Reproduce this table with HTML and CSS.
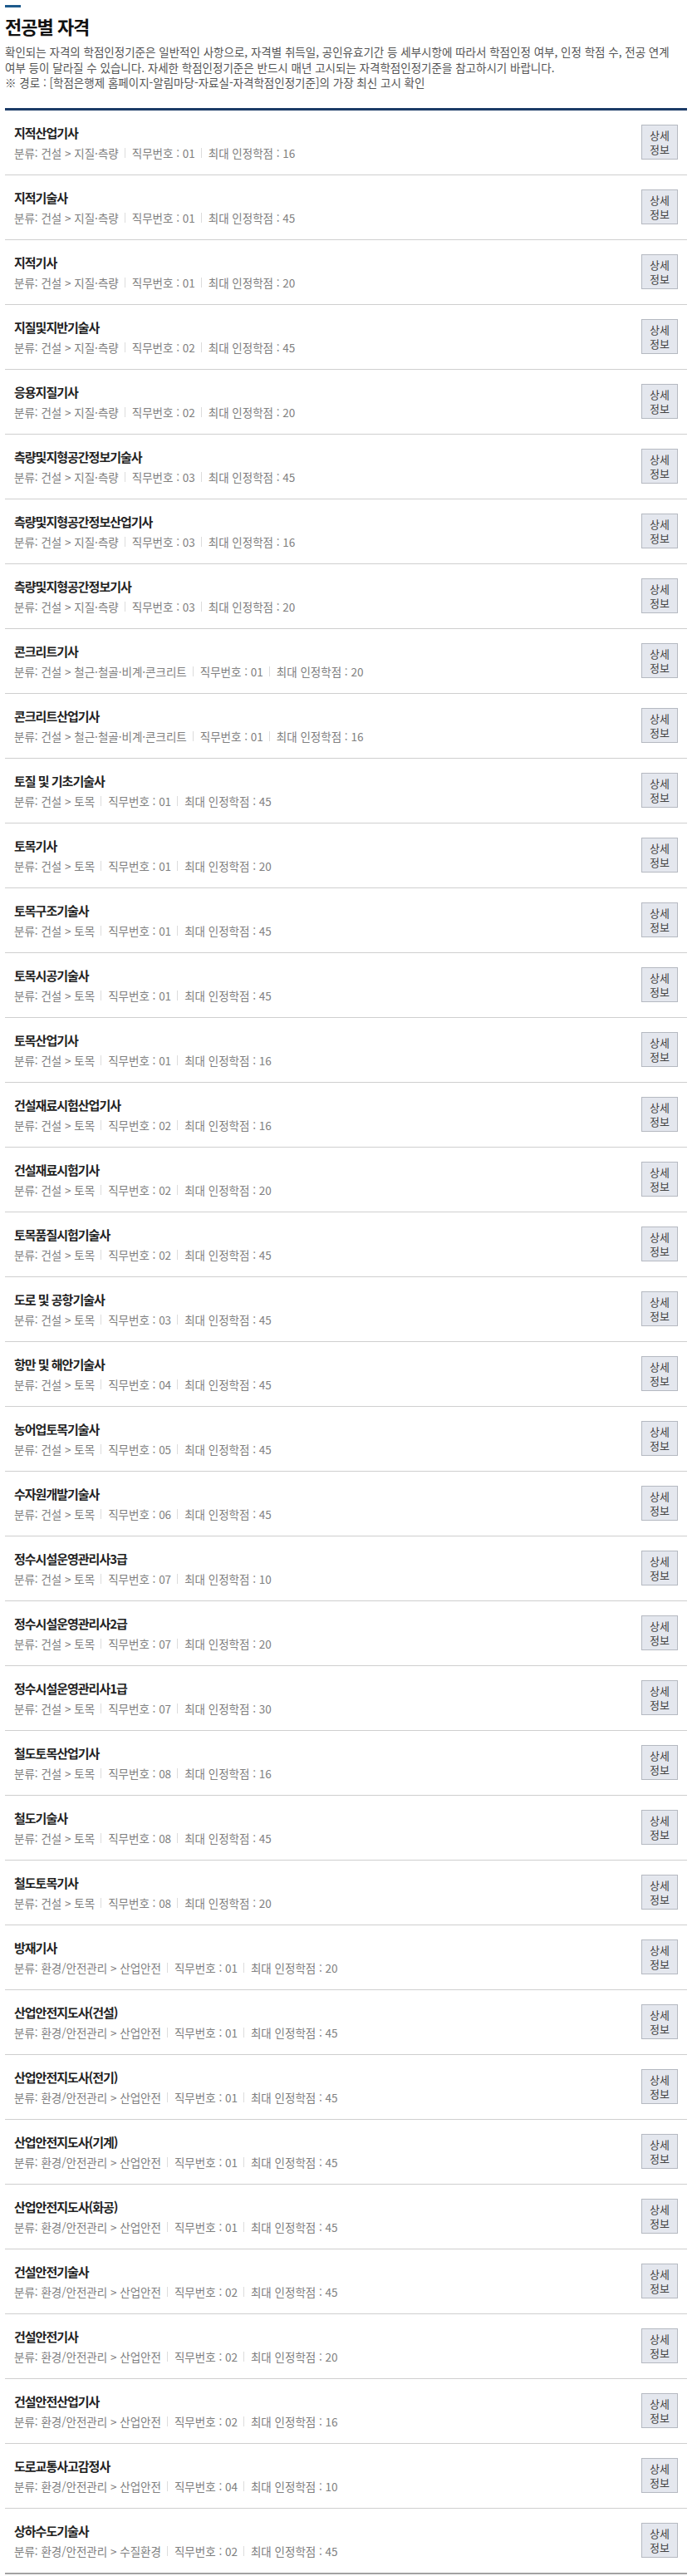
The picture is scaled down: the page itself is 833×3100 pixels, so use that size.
FILE: index.html
```html
<!DOCTYPE html>
<html lang="ko">
<head>
    <meta charset="utf-8">
    <title>전공별 자격</title>
    <link rel="stylesheet" href="styles.css">
</head>
<body>

<div id="main">
    <span class="title-bar"></span>
    <h2 id="title">전공별 자격</h2>
    <p class="desc">확인되는 자격의 학점인정기준은 일반적인 사항으로, 자격별 취득일, 공인유효기간 등 세부시항에 따라서 학점인정 여부, 인정 학점 수, 전공 연계 여부 등이 달라질 수 있습니다. 자세한 학점인정기준은 반드시 매년 고시되는 자격학점인정기준을 참고하시기 바랍니다.<br>※ 경로 : [학점은행제 홈페이지-알림마당-자료실-자격학점인정기준]의 가장 최신 고시 확인</p>

    <!--license list-->
    <ul class="list">
        <li class="item"><div class="info"><p class="name">지적산업기사</p><p class="meta"><span>분류: 건설 &gt; 지질·측량</span><span>직무번호 : 01</span><span>최대 인정학점 : 16</span></p></div><button class="more" type="button">상세<br>정보</button></li>
        <li class="item"><div class="info"><p class="name">지적기술사</p><p class="meta"><span>분류: 건설 &gt; 지질·측량</span><span>직무번호 : 01</span><span>최대 인정학점 : 45</span></p></div><button class="more" type="button">상세<br>정보</button></li>
        <li class="item"><div class="info"><p class="name">지적기사</p><p class="meta"><span>분류: 건설 &gt; 지질·측량</span><span>직무번호 : 01</span><span>최대 인정학점 : 20</span></p></div><button class="more" type="button">상세<br>정보</button></li>
        <li class="item"><div class="info"><p class="name">지질및지반기술사</p><p class="meta"><span>분류: 건설 &gt; 지질·측량</span><span>직무번호 : 02</span><span>최대 인정학점 : 45</span></p></div><button class="more" type="button">상세<br>정보</button></li>
        <li class="item"><div class="info"><p class="name">응용지질기사</p><p class="meta"><span>분류: 건설 &gt; 지질·측량</span><span>직무번호 : 02</span><span>최대 인정학점 : 20</span></p></div><button class="more" type="button">상세<br>정보</button></li>
        <li class="item"><div class="info"><p class="name">측량및지형공간정보기술사</p><p class="meta"><span>분류: 건설 &gt; 지질·측량</span><span>직무번호 : 03</span><span>최대 인정학점 : 45</span></p></div><button class="more" type="button">상세<br>정보</button></li>
        <li class="item"><div class="info"><p class="name">측량및지형공간정보산업기사</p><p class="meta"><span>분류: 건설 &gt; 지질·측량</span><span>직무번호 : 03</span><span>최대 인정학점 : 16</span></p></div><button class="more" type="button">상세<br>정보</button></li>
        <li class="item"><div class="info"><p class="name">측량및지형공간정보기사</p><p class="meta"><span>분류: 건설 &gt; 지질·측량</span><span>직무번호 : 03</span><span>최대 인정학점 : 20</span></p></div><button class="more" type="button">상세<br>정보</button></li>
        <li class="item"><div class="info"><p class="name">콘크리트기사</p><p class="meta"><span>분류: 건설 &gt; 철근·철골·비계·콘크리트</span><span>직무번호 : 01</span><span>최대 인정학점 : 20</span></p></div><button class="more" type="button">상세<br>정보</button></li>
        <li class="item"><div class="info"><p class="name">콘크리트산업기사</p><p class="meta"><span>분류: 건설 &gt; 철근·철골·비계·콘크리트</span><span>직무번호 : 01</span><span>최대 인정학점 : 16</span></p></div><button class="more" type="button">상세<br>정보</button></li>
        <li class="item"><div class="info"><p class="name">토질 및 기초기술사</p><p class="meta"><span>분류: 건설 &gt; 토목</span><span>직무번호 : 01</span><span>최대 인정학점 : 45</span></p></div><button class="more" type="button">상세<br>정보</button></li>
        <li class="item"><div class="info"><p class="name">토목기사</p><p class="meta"><span>분류: 건설 &gt; 토목</span><span>직무번호 : 01</span><span>최대 인정학점 : 20</span></p></div><button class="more" type="button">상세<br>정보</button></li>
        <li class="item"><div class="info"><p class="name">토목구조기술사</p><p class="meta"><span>분류: 건설 &gt; 토목</span><span>직무번호 : 01</span><span>최대 인정학점 : 45</span></p></div><button class="more" type="button">상세<br>정보</button></li>
        <li class="item"><div class="info"><p class="name">토목시공기술사</p><p class="meta"><span>분류: 건설 &gt; 토목</span><span>직무번호 : 01</span><span>최대 인정학점 : 45</span></p></div><button class="more" type="button">상세<br>정보</button></li>
        <li class="item"><div class="info"><p class="name">토목산업기사</p><p class="meta"><span>분류: 건설 &gt; 토목</span><span>직무번호 : 01</span><span>최대 인정학점 : 16</span></p></div><button class="more" type="button">상세<br>정보</button></li>
        <li class="item"><div class="info"><p class="name">건설재료시험산업기사</p><p class="meta"><span>분류: 건설 &gt; 토목</span><span>직무번호 : 02</span><span>최대 인정학점 : 16</span></p></div><button class="more" type="button">상세<br>정보</button></li>
        <li class="item"><div class="info"><p class="name">건설재료시험기사</p><p class="meta"><span>분류: 건설 &gt; 토목</span><span>직무번호 : 02</span><span>최대 인정학점 : 20</span></p></div><button class="more" type="button">상세<br>정보</button></li>
        <li class="item"><div class="info"><p class="name">토목품질시험기술사</p><p class="meta"><span>분류: 건설 &gt; 토목</span><span>직무번호 : 02</span><span>최대 인정학점 : 45</span></p></div><button class="more" type="button">상세<br>정보</button></li>
        <li class="item"><div class="info"><p class="name">도로 및 공항기술사</p><p class="meta"><span>분류: 건설 &gt; 토목</span><span>직무번호 : 03</span><span>최대 인정학점 : 45</span></p></div><button class="more" type="button">상세<br>정보</button></li>
        <li class="item"><div class="info"><p class="name">항만 및 해안기술사</p><p class="meta"><span>분류: 건설 &gt; 토목</span><span>직무번호 : 04</span><span>최대 인정학점 : 45</span></p></div><button class="more" type="button">상세<br>정보</button></li>
        <li class="item"><div class="info"><p class="name">농어업토목기술사</p><p class="meta"><span>분류: 건설 &gt; 토목</span><span>직무번호 : 05</span><span>최대 인정학점 : 45</span></p></div><button class="more" type="button">상세<br>정보</button></li>
        <li class="item"><div class="info"><p class="name">수자원개발기술사</p><p class="meta"><span>분류: 건설 &gt; 토목</span><span>직무번호 : 06</span><span>최대 인정학점 : 45</span></p></div><button class="more" type="button">상세<br>정보</button></li>
        <li class="item"><div class="info"><p class="name">정수시설운영관리사3급</p><p class="meta"><span>분류: 건설 &gt; 토목</span><span>직무번호 : 07</span><span>최대 인정학점 : 10</span></p></div><button class="more" type="button">상세<br>정보</button></li>
        <li class="item"><div class="info"><p class="name">정수시설운영관리사2급</p><p class="meta"><span>분류: 건설 &gt; 토목</span><span>직무번호 : 07</span><span>최대 인정학점 : 20</span></p></div><button class="more" type="button">상세<br>정보</button></li>
        <li class="item"><div class="info"><p class="name">정수시설운영관리사1급</p><p class="meta"><span>분류: 건설 &gt; 토목</span><span>직무번호 : 07</span><span>최대 인정학점 : 30</span></p></div><button class="more" type="button">상세<br>정보</button></li>
        <li class="item"><div class="info"><p class="name">철도토목산업기사</p><p class="meta"><span>분류: 건설 &gt; 토목</span><span>직무번호 : 08</span><span>최대 인정학점 : 16</span></p></div><button class="more" type="button">상세<br>정보</button></li>
        <li class="item"><div class="info"><p class="name">철도기술사</p><p class="meta"><span>분류: 건설 &gt; 토목</span><span>직무번호 : 08</span><span>최대 인정학점 : 45</span></p></div><button class="more" type="button">상세<br>정보</button></li>
        <li class="item"><div class="info"><p class="name">철도토목기사</p><p class="meta"><span>분류: 건설 &gt; 토목</span><span>직무번호 : 08</span><span>최대 인정학점 : 20</span></p></div><button class="more" type="button">상세<br>정보</button></li>
        <li class="item"><div class="info"><p class="name">방재기사</p><p class="meta"><span>분류: 환경/안전관리 &gt; 산업안전</span><span>직무번호 : 01</span><span>최대 인정학점 : 20</span></p></div><button class="more" type="button">상세<br>정보</button></li>
        <li class="item"><div class="info"><p class="name">산업안전지도사(건설)</p><p class="meta"><span>분류: 환경/안전관리 &gt; 산업안전</span><span>직무번호 : 01</span><span>최대 인정학점 : 45</span></p></div><button class="more" type="button">상세<br>정보</button></li>
        <li class="item"><div class="info"><p class="name">산업안전지도사(전기)</p><p class="meta"><span>분류: 환경/안전관리 &gt; 산업안전</span><span>직무번호 : 01</span><span>최대 인정학점 : 45</span></p></div><button class="more" type="button">상세<br>정보</button></li>
        <li class="item"><div class="info"><p class="name">산업안전지도사(기계)</p><p class="meta"><span>분류: 환경/안전관리 &gt; 산업안전</span><span>직무번호 : 01</span><span>최대 인정학점 : 45</span></p></div><button class="more" type="button">상세<br>정보</button></li>
        <li class="item"><div class="info"><p class="name">산업안전지도사(화공)</p><p class="meta"><span>분류: 환경/안전관리 &gt; 산업안전</span><span>직무번호 : 01</span><span>최대 인정학점 : 45</span></p></div><button class="more" type="button">상세<br>정보</button></li>
        <li class="item"><div class="info"><p class="name">건설안전기술사</p><p class="meta"><span>분류: 환경/안전관리 &gt; 산업안전</span><span>직무번호 : 02</span><span>최대 인정학점 : 45</span></p></div><button class="more" type="button">상세<br>정보</button></li>
        <li class="item"><div class="info"><p class="name">건설안전기사</p><p class="meta"><span>분류: 환경/안전관리 &gt; 산업안전</span><span>직무번호 : 02</span><span>최대 인정학점 : 20</span></p></div><button class="more" type="button">상세<br>정보</button></li>
        <li class="item"><div class="info"><p class="name">건설안전산업기사</p><p class="meta"><span>분류: 환경/안전관리 &gt; 산업안전</span><span>직무번호 : 02</span><span>최대 인정학점 : 16</span></p></div><button class="more" type="button">상세<br>정보</button></li>
        <li class="item"><div class="info"><p class="name">도로교통사고감정사</p><p class="meta"><span>분류: 환경/안전관리 &gt; 산업안전</span><span>직무번호 : 04</span><span>최대 인정학점 : 10</span></p></div><button class="more" type="button">상세<br>정보</button></li>
        <li class="item"><div class="info"><p class="name">상하수도기술사</p><p class="meta"><span>분류: 환경/안전관리 &gt; 수질환경</span><span>직무번호 : 02</span><span>최대 인정학점 : 45</span></p></div><button class="more" type="button">상세<br>정보</button></li>
    </ul>
</div>

</body>
</html>
```

FILE: styles.css
```css
*{ margin: 0; padding: 0; box-sizing: border-box; }
ul,ol{ list-style: none; }
body{ font-family: "Noto Sans CJK KR", "Noto Sans", sans-serif; color: #222; background: #fff; word-break: keep-all; }

#main{ padding: 6px 6px 0; }

/*page heading*/
.title-bar{ display: block; width: 19px; height: 3px; background: #1d5a8c; }
#title{ margin-top: 7px; font-size: 22px; line-height: 30px; font-weight: 700; color: #111; letter-spacing: -1px; }
.desc{ margin-top: 7px; font-size: 13.5px; line-height: 18.5px; color: #555; }

/*license list*/
.list{ margin-top: 21px; border-top: 3px solid #1c3b67; border-bottom: 2px solid #a3a3a3; }
.list .item{ display: flex; align-items: center; justify-content: space-between; height: 78px; padding: 0 11px; border-bottom: 1px solid #cfcfcf; }
.list .item:last-child{ border-bottom: none; height: 77px; }
.list .info{ padding-top: 1px; }
.list .name{ font-size: 15px; line-height: 22px; font-weight: 700; color: #222; letter-spacing: -1px; }
.list .meta{ margin-top: 3px; font-size: 13.5px; line-height: 20px; color: #808080; display: flex; align-items: center; }
.list .meta span + span{ margin-left: 7px; padding-left: 8px; border-left: 1px solid #dcdcdc; line-height: 12px; }

.more{ width: 44px; height: 42px; background: #e4e7ee; border: 1px solid #b5b9c1; color: #444; font-family: inherit; font-size: 13px; line-height: 17px; cursor: pointer; }
```
